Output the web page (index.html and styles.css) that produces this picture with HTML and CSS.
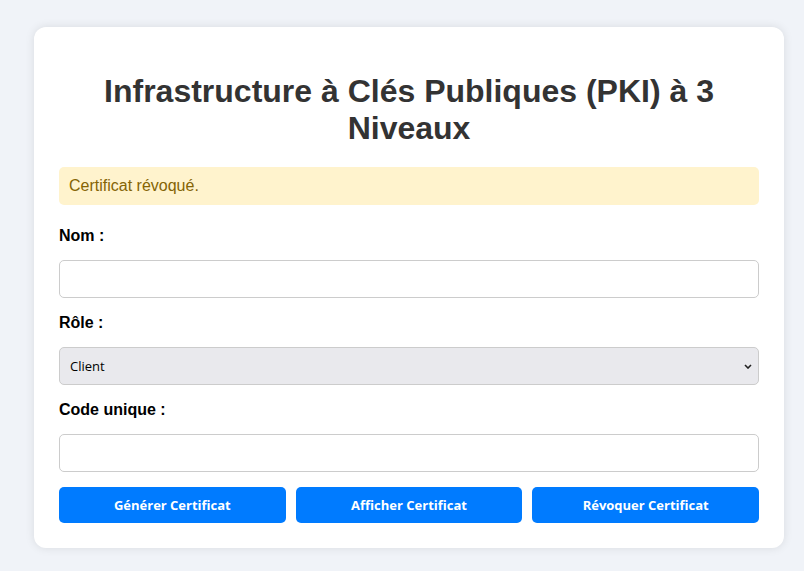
FILE: index.html
```html
<!DOCTYPE html>
<html lang="fr">
<head>
<meta charset="utf-8">
<title>PKI à 3 Niveaux</title>
<link rel="stylesheet" href="styles.css">
</head>
<body>
<div class="container">
  <h1 class="title">Infrastructure à Clés Publiques (PKI) à 3 Niveaux</h1>
  <div class="alert">Certificat révoqué.</div>
  <form class="form">
    <label class="label" for="nom">Nom :</label>
    <input class="field" type="text" id="nom">
    <label class="label" for="role">Rôle :</label>
    <div class="select-wrap">
      <select class="field select" id="role">
        <option>Client</option>
      </select>
      <svg class="chevron" width="8" height="5" viewBox="0 0 8 5" aria-hidden="true"><path d="M1 1l3 3 3-3" fill="none" stroke="#222" stroke-width="1.6"/></svg>
    </div>
    <label class="label" for="code">Code unique :</label>
    <input class="field" type="text" id="code">
    <div class="actions">
      <button type="button" class="btn">Générer Certificat</button>
      <button type="button" class="btn">Afficher Certificat</button>
      <button type="button" class="btn">Révoquer Certificat</button>
    </div>
  </form>
</div>
</body>
</html>
```
FILE: styles.css
```css
html, body {
  margin: 0;
  padding: 0;
}
body {
  background: #f0f3f8;
  font-family: "Liberation Sans", Arial, sans-serif;
  color: #333;
  padding: 27px 20px 20px 34px;
}
.container {
  box-sizing: border-box;
  width: 750px;
  background: #fff;
  border-radius: 12px;
  padding: 25px;
  box-shadow: 0 0 10px rgba(0, 0, 0, 0.1);
}
.title {
  font-size: 32px;
  font-weight: bold;
  text-align: center;
  color: #333;
  margin: 21px 0 20px;
}
.alert {
  background: #fff3cd;
  color: #856404;
  padding: 10px;
  line-height: 18px;
  border-radius: 5px;
  font-size: 16px;
  margin-bottom: 21px;
}
.form {
  display: flex;
  flex-direction: column;
}
.label {
  font-weight: bold;
  color: #000;
  font-size: 16px;
  padding-top: 1px;
  margin-bottom: 15px;
}
.field {
  box-sizing: border-box;
  width: 100%;
  padding: 10px;
  border: 1px solid #ccc;
  border-radius: 5px;
  height: 38px;
  margin-bottom: 15px;
  font-size: 13px;
  font-family: "Open Sans", "Noto Sans", sans-serif;
  background: #fff;
}
.select-wrap {
  position: relative;
}
.select {
  appearance: none;
  -webkit-appearance: none;
  background-color: #e9e9ed;
  height: 38px;
  padding: 0 10px;
  color: #000;
}
.chevron {
  position: absolute;
  right: 7px;
  top: 17px;
  pointer-events: none;
}
.actions {
  display: flex;
  gap: 10px;
}
.btn {
  flex: 1;
  height: 36px;
  border: none;
  border-radius: 5px;
  background: #007bff;
  color: #fff;
  font-family: "Open Sans", "Noto Sans", sans-serif;
  font-weight: bold;
  font-size: 13px;
}
```
